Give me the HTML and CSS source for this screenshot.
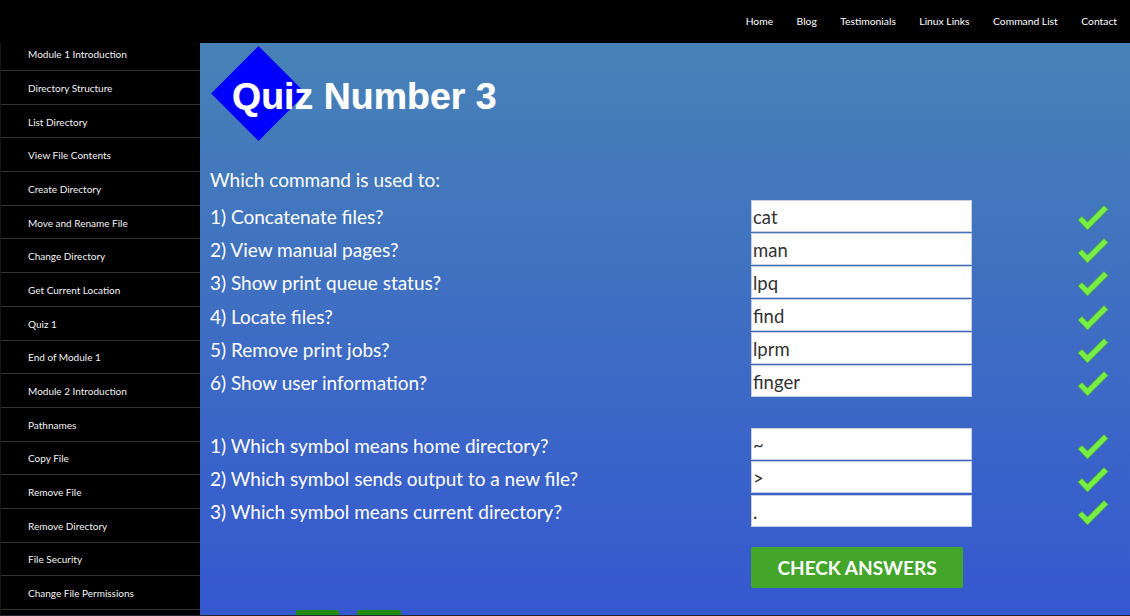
FILE: index.html
```html
<!DOCTYPE html>
<html>
<head>
<meta charset="utf-8">
<link rel="stylesheet" href="styles.css">
</head>
<body>
<header class="topbar">
  <nav class="topnav">
    <a>Home</a><a>Blog</a><a>Testimonials</a><a>Linux Links</a><a>Command List</a><a>Contact</a>
  </nav>
</header>
<div class="layout">
  <aside class="sidebar">
    <a class="side-item">Module 1 Introduction</a>
    <a class="side-item">Directory Structure</a>
    <a class="side-item">List Directory</a>
    <a class="side-item">View File Contents</a>
    <a class="side-item">Create Directory</a>
    <a class="side-item">Move and Rename File</a>
    <a class="side-item">Change Directory</a>
    <a class="side-item">Get Current Location</a>
    <a class="side-item">Quiz 1</a>
    <a class="side-item">End of Module 1</a>
    <a class="side-item">Module 2 Introduction</a>
    <a class="side-item">Pathnames</a>
    <a class="side-item">Copy File</a>
    <a class="side-item">Remove File</a>
    <a class="side-item">Remove Directory</a>
    <a class="side-item">File Security</a>
    <a class="side-item">Change File Permissions</a>
  </aside>
  <main class="main">
    <div class="logo">
      <div class="diamond-cell"><div class="diamond"></div></div>
      <h1 class="title">Quiz Number 3</h1>
    </div>
    <div class="quiz">
      <div class="intro">Which command is used to:</div>

      <div class="q">1) Concatenate files?</div>
      <input class="answer" value="cat">
      <div class="mark"><svg viewBox="0 0 32 26" width="32" height="26"><path d="M1 15 L5 11.5 L10.5 17 L27 0.5 L31 4.5 L10.5 25 Z" fill="#77ee44" stroke="#4fa82e" stroke-width="0.8" stroke-linejoin="round"/></svg></div>

      <div class="q">2) View manual pages?</div>
      <input class="answer" value="man">
      <div class="mark"><svg viewBox="0 0 32 26" width="32" height="26"><path d="M1 15 L5 11.5 L10.5 17 L27 0.5 L31 4.5 L10.5 25 Z" fill="#77ee44" stroke="#4fa82e" stroke-width="0.8" stroke-linejoin="round"/></svg></div>

      <div class="q">3) Show print queue status?</div>
      <input class="answer" value="lpq">
      <div class="mark"><svg viewBox="0 0 32 26" width="32" height="26"><path d="M1 15 L5 11.5 L10.5 17 L27 0.5 L31 4.5 L10.5 25 Z" fill="#77ee44" stroke="#4fa82e" stroke-width="0.8" stroke-linejoin="round"/></svg></div>

      <div class="q">4) Locate files?</div>
      <input class="answer" value="find">
      <div class="mark"><svg viewBox="0 0 32 26" width="32" height="26"><path d="M1 15 L5 11.5 L10.5 17 L27 0.5 L31 4.5 L10.5 25 Z" fill="#77ee44" stroke="#4fa82e" stroke-width="0.8" stroke-linejoin="round"/></svg></div>

      <div class="q">5) Remove print jobs?</div>
      <input class="answer" value="lprm">
      <div class="mark"><svg viewBox="0 0 32 26" width="32" height="26"><path d="M1 15 L5 11.5 L10.5 17 L27 0.5 L31 4.5 L10.5 25 Z" fill="#77ee44" stroke="#4fa82e" stroke-width="0.8" stroke-linejoin="round"/></svg></div>

      <div class="q">6) Show user information?</div>
      <input class="answer" value="finger">
      <div class="mark"><svg viewBox="0 0 32 26" width="32" height="26"><path d="M1 15 L5 11.5 L10.5 17 L27 0.5 L31 4.5 L10.5 25 Z" fill="#77ee44" stroke="#4fa82e" stroke-width="0.8" stroke-linejoin="round"/></svg></div>

      <div class="spacer"></div>

      <div class="q">1) Which symbol means home directory?</div>
      <input class="answer" value="~">
      <div class="mark"><svg viewBox="0 0 32 26" width="32" height="26"><path d="M1 15 L5 11.5 L10.5 17 L27 0.5 L31 4.5 L10.5 25 Z" fill="#77ee44" stroke="#4fa82e" stroke-width="0.8" stroke-linejoin="round"/></svg></div>

      <div class="q">2) Which symbol sends output to a new file?</div>
      <input class="answer" value="&gt;">
      <div class="mark"><svg viewBox="0 0 32 26" width="32" height="26"><path d="M1 15 L5 11.5 L10.5 17 L27 0.5 L31 4.5 L10.5 25 Z" fill="#77ee44" stroke="#4fa82e" stroke-width="0.8" stroke-linejoin="round"/></svg></div>

      <div class="q">3) Which symbol means current directory?</div>
      <input class="answer" value=".">
      <div class="mark"><svg viewBox="0 0 32 26" width="32" height="26"><path d="M1 15 L5 11.5 L10.5 17 L27 0.5 L31 4.5 L10.5 25 Z" fill="#77ee44" stroke="#4fa82e" stroke-width="0.8" stroke-linejoin="round"/></svg></div>

      <div class="btn-cell"><button class="check-btn">CHECK ANSWERS</button></div>
    </div>
    <div class="pager">
      <a class="page-btn"></a><a class="page-btn wide"></a>
    </div>
  </main>
</div>
</body>
</html>
```

FILE: styles.css
```css
* { box-sizing: border-box; }
html, body { margin: 0; padding: 0; }
body {
  background: #25232e;
  font-family: Lato, "Open Sans", sans-serif;
  height: 616px;
  overflow: hidden;
}
.topbar {
  height: 43px;
  background: #000;
  display: flex;
  justify-content: flex-end;
  align-items: center;
}
.topnav {
  display: flex;
  gap: 23.5px;
  padding-right: 13px;
  padding-bottom: 1px;
}
.topnav a {
  color: #fff;
  font-size: 10.3px;
  text-decoration: none;
}
.layout {
  display: flex;
  height: 572px;
}
.sidebar {
  width: 200px;
  flex: none;
  background: #000;
  display: flex;
  flex-direction: column;
  overflow: hidden;
  border-left: 1px solid #151515;
}
.side-item {
  flex: none;
  height: 33.7px;
  display: flex;
  align-items: center;
  padding-left: 27px;
  color: #f2f2f2;
  font-size: 10px;
  border-bottom: 1px solid #333;
  padding-top: 1px;
}
.side-item:first-child {
  height: 28px;
  padding-top: 0;
  padding-bottom: 5px;
}
.main {
  flex: 1;
  background: linear-gradient(180deg, #4682b6 0%, #3f6fc2 45%, #3558d0 100%);
  padding: 3px 0 0 10px;
  overflow: hidden;
}
.logo {
  display: grid;
  grid-template-columns: 95px auto;
  height: 95px;
  margin-left: 1px;
}
.diamond-cell {
  grid-area: 1 / 1;
  display: flex;
  align-items: center;
  justify-content: center;
}
.diamond {
  width: 67px;
  height: 67px;
  background: #0000ff;
  transform: rotate(45deg);
}
.title {
  grid-area: 1 / 1 / 2 / 3;
  position: relative;
  z-index: 1;
  margin: 0 0 0 21px;
  align-self: center;
  padding-top: 6px;
  font-family: "Liberation Sans", Arial, sans-serif;
  font-weight: bold;
  font-size: 37.5px;
  color: #fff;
  white-space: nowrap;
  text-shadow: 0 0 1px rgba(255,255,255,0.6);
}
.quiz {
  display: grid;
  grid-template-columns: 541px 221px 1fr;
  grid-auto-rows: auto;
  margin-top: 21px;
  color: #fff;
}
.intro {
  grid-column: 1 / 4;
  font-size: 19px;
  line-height: 36px;
  height: 37.5px;
}
.q {
  font-size: 19px;
  height: 33.2px;
  display: flex;
  align-items: center;
  padding-top: 1px;
}
.answer {
  align-self: start;
  height: 32px;
  width: 221px;
  margin: 0;
  border: 1px solid #c8cde0;
  background: #fff;
  font-family: Lato, sans-serif;
  font-size: 18.5px;
  color: #333;
  padding: 2px 0 0 1px;
}
.mark {
  display: flex;
  align-items: center;
  padding-left: 105px;
  padding-top: 4px;
}
.spacer {
  grid-column: 1 / 4;
  height: 29.5px;
}
.btn-cell {
  grid-column: 2;
  padding-top: 19px;
}
.check-btn {
  width: 212px;
  height: 41px;
  border: none;
  border-radius: 2px;
  background: #43a52a;
  color: #fff;
  font-family: Lato, sans-serif;
  font-weight: bold;
  font-size: 19px;
  padding: 0;
}
.pager {
  display: flex;
  gap: 18px;
  margin-top: 22px;
  padding-left: 86px;
}
.page-btn {
  width: 43px;
  height: 30px;
  background: #228b12;
  border-radius: 2px;
}
.page-btn.wide { width: 44px; }
```
